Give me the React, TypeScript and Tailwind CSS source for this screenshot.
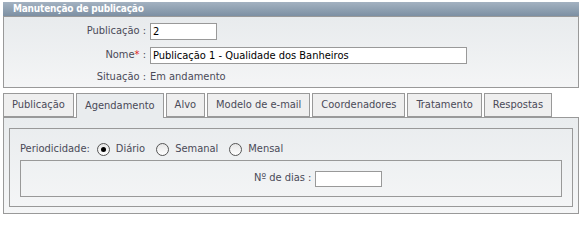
import React from "react"

const tabs = ["Publicação", "Agendamento", "Alvo", "Modelo de e-mail", "Coordenadores", "Tratamento", "Respostas"]

function Radio({ checked, label }: { checked?: boolean; label: string }) {
  return (
    <label className="flex items-center">
      <span className="w-[13px] h-[13px] rounded-full border border-[#555] bg-gradient-to-b from-[#e6e6e6] to-white flex items-center justify-center">
        {checked && <span className="w-[5px] h-[5px] rounded-full bg-black" />}
      </span>
      <span className="ml-[6px]">{label}</span>
    </label>
  )
}

export default function App() {
  return (
    <div className="w-[582px] h-[215px] bg-white px-[3px] pt-[2px] text-[11px] text-[#4a4a58] font-['DejaVu_Sans_Condensed','DejaVu_Sans',sans-serif]">
      <div className="h-[14px] bg-gradient-to-b from-[#a3b2c1] to-[#7d90a3] text-white text-[10px] font-bold tracking-[-0.2px] leading-[14px] pl-[10px]">
        Manutenção de publicação
      </div>
      <div className="border border-[#999] bg-gradient-to-b from-[#e8ebed] to-[#f4f5f6] pt-[2px] pb-[2px]">
        <div className="h-[24px] flex items-center">
          <span className="w-[142px] text-right">Publicação :</span>
          <input
            className="ml-[4px] w-[67px] h-[17px] border border-[#999] bg-white px-[2px] text-[11px] text-black outline-none"
            defaultValue="2"
          />
        </div>
        <div className="h-[24px] flex items-center">
          <span className="w-[142px] text-right">
            Nome<span className="text-[#e02020]">*</span> :
          </span>
          <input
            className="ml-[4px] w-[317px] h-[17px] border border-[#999] bg-white px-[2px] text-[11px] text-black outline-none"
            defaultValue="Publicação 1 - Qualidade dos Banheiros"
          />
        </div>
        <div className="h-[16px] mt-[2px] flex items-center">
          <span className="w-[142px] text-right">Situação :</span>
          <span className="ml-[4px]">Em andamento</span>
        </div>
      </div>

      <div className="mt-[5px] flex items-end h-[24px]">
        {tabs.map((t, i) => (
          <div
            key={t}
            className={
              i === 1
                ? "h-[25px] -mb-px relative z-10 mr-[2px] px-[8px] border border-b-0 border-[#999] bg-[#e9ecee] flex items-center"
                : "h-[24px] mr-[2px] px-[8px] border border-[#999] bg-[#efefef] flex items-center"
            }
          >
            {t}
          </div>
        ))}
      </div>
      <div className="border border-[#999] bg-gradient-to-b from-[#e9ecee] to-[#f5f6f7] px-[5px] pt-[10px] pb-[6px]">
        <div className="border border-[#999] px-[10px] pb-[9px]">
          <div className="h-[31px] flex items-center pt-[10px]">
            <span className="mr-[7px]">Periodicidade:</span>
            <div className="flex items-center gap-[11px]">
              <Radio checked label="Diário" />
              <Radio label="Semanal" />
              <Radio label="Mensal" />
            </div>
          </div>
          <div className="h-[37px] border border-[#999] flex items-center pl-[233px]">
            <span>Nº de dias :</span>
            <input className="ml-[4px] w-[67px] h-[16px] border border-[#999] bg-white outline-none" />
          </div>
        </div>
      </div>
    </div>
  )
}
